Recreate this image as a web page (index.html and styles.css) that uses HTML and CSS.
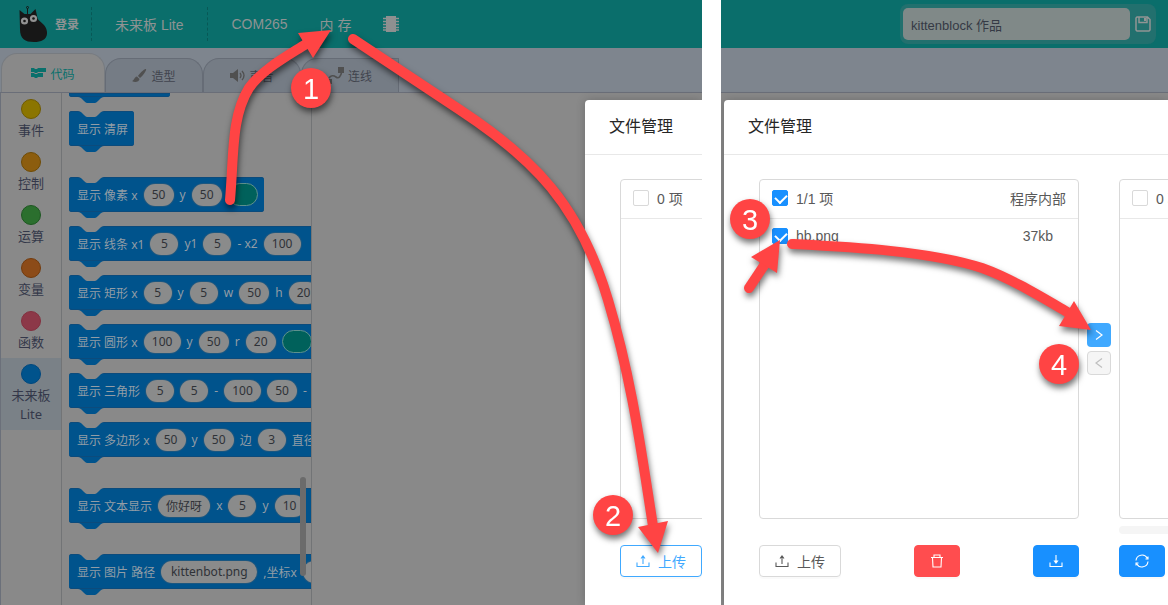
FILE: index.html
```html
<!DOCTYPE html>
<html lang="zh-CN">
<head>
<meta charset="utf-8">
<title>文件管理</title>
<link rel="stylesheet" href="styles.css">
</head>
<body>
<main class="guide">
  <section class="shot">
    <header class="topbar">
      <svg class="logo" viewBox="0 0 28 36" aria-hidden="true">
        <path d="M8.500 8V2.500" stroke="#171717" fill="none"/><circle cx="8.500" cy="1.500" r="1" fill="none" stroke="#171717"/>
        <path d="M0.500 4 5.500 8h6L16.500 3l2 9c1 4 9 6 9.500 14 .5 7-5 10-13 10C6 36 1 33 1 23Z" fill="#171717"/>
        <circle cx="5.500" cy="15" r="3.600" fill="#929292"/><circle cx="14.500" cy="12.500" r="3.600" fill="#929292"/>
        <circle cx="5.500" cy="15" r="1.300" fill="#171717"/><circle cx="14.500" cy="12.500" r="1.300" fill="#171717"/>
      </svg>
      <button class="login">登录</button>
      <button class="menu device">未来板 Lite</button>
      <button class="menu">COM265</button>
      <button class="menu memory">内 存</button>
      <button class="menu chip" aria-label="固件"><svg width="16" height="16" viewBox="0 0 16 16"><path d="M3 0h10v16H3z" fill="#8e9090"/><path d="M0 2.500h16M0 5.500h16M0 8.500h16M0 11.500h16M0 14h16" stroke="#8e9090" stroke-width="1.500"/></svg></button>
    </header>
    <nav class="tabs">
      <button class="tab active"><svg width="15" height="12" viewBox="0 0 15 12"><path d="M0 1h3l1 1h2l1-1h8v4H7L6 6H4L3 5H0zM0 6h3l1 1h2l1-1h5v4H7l-1 1H4l-1-1H0z" fill="currentColor"/></svg>代码</button>
      <button class="tab"><svg width="15" height="15" viewBox="0 0 15 15"><path d="M14 1c1 1-4 8-6 9L6 8c1-2 7-8 8-7zM5 8.500 7.500 11C7 14 3 15 0 13c2 0 2-4 5-4.500z" fill="#505050"/></svg>造型</button>
      <button class="tab"><svg width="15" height="13" viewBox="0 0 15 13"><path d="M0 4h3l5-4v13L3 9H0z" fill="#505050"/><path d="M10 4q2 2.500 0 5M12 2q4 4.500 0 9" fill="none" stroke="#505050" stroke-width="1.300"/></svg>声音</button>
      <button class="tab last"><svg width="16" height="17" viewBox="0 0 16 17"><path d="M1 11q3-4 7-1t6-6" fill="none" stroke="#505050" stroke-width="1.600"/><path d="M10 0h6v6h-6zM0 12h4v5H0z" fill="#505050"/></svg>连线</button>
    </nav>
    <div class="editor">
      <nav class="categories">
        <button class="category"><i class="dot yellow"></i>事件</button>
        <button class="category"><i class="dot amber"></i>控制</button>
        <button class="category"><i class="dot green"></i>运算</button>
        <button class="category"><i class="dot orange"></i>变量</button>
        <button class="category"><i class="dot pink"></i>函数</button>
        <button class="category selected"><i class="dot blue"></i>未来板<br>Lite</button>
      </nav>
      <div class="palette">
        <div class="block cut"></div>
        <div class="block">显示 清屏</div>
        <div class="block spaced">显示 像素 x <input class="field two" aria-label="x" value="50"> y <input class="field two" aria-label="y" value="50"> <span class="swatch"></span></div>
        <div class="block">显示 线条 x1 <input class="field" aria-label="x1" value="5"> y1 <input class="field" aria-label="y1" value="5"> - x2 <input class="field three" aria-label="x2" value="100"><span class="tail"></span></div>
        <div class="block">显示 矩形 x <input class="field" aria-label="x" value="5"> y <input class="field" aria-label="y" value="5"> w <input class="field two" aria-label="w" value="50"> h <input class="field two" aria-label="h" value="20"></div>
        <div class="block">显示 圆形 x <input class="field three" aria-label="x" value="100"> y <input class="field two" aria-label="y" value="50"> r <input class="field two" aria-label="r" value="20"> <span class="swatch"></span></div>
        <div class="block">显示 三角形 <input class="field" aria-label="x1" value="5"> <input class="field" aria-label="y1" value="5"> - <input class="field three" aria-label="x2" value="100"> <input class="field two" aria-label="y2" value="50"> -</div>
        <div class="block">显示 多边形 x <input class="field two" aria-label="x" value="50"> y <input class="field two" aria-label="y" value="50"> 边 <input class="field" aria-label="边" value="3"> 直径</div>
        <div class="block spaced">显示 文本显示 <input class="field word" aria-label="文本" value="你好呀"> x <input class="field" aria-label="x" value="5"> y <input class="field two" aria-label="y" value="10"><span class="tail"></span></div>
        <div class="block spaced">显示 图片 路径 <input class="field path" aria-label="路径" value="kittenbot.png"> ,坐标x <input class="field" aria-label="x" value="5"></div>
        <div class="scrollbar"></div>
      </div>
      <div class="stage"></div>
    </div>
    <section class="dialog narrow" aria-label="文件管理">
      <h2 class="title">文件管理</h2>
      <div class="dialog-body">
        <div class="transfer">
          <div class="panel">
            <label class="row head"><input class="check" type="checkbox"><span>0 项</span></label>
          </div>
        </div>
        <div class="actions">
          <button class="btn upload focus"><svg class="icon" viewBox="0 0 14 14"><path d="M1 8.500V12.500h12V8.500M7 10V2M5 4.500 7 2l2 2.500"/></svg>上传</button>
        </div>
      </div>
    </section>
  </section>

  <section class="shot">
    <header class="topbar end">
      <div class="project">
        <input class="name" aria-label="作品名称" value="kittenblock 作品">
        <button class="save" aria-label="保存"><svg width="16" height="16" viewBox="0 0 16 16"><path d="M2 1h10.500L15 3.500V14l-1 1H2l-1-1V2zM4 1v5.500h8V1" fill="none" stroke="#919494" stroke-width="1.500"/><path d="M9 2h2v3H9z" fill="#919494"/></svg></button>
      </div>
    </header>
    <div class="tabs"></div>
    <div class="editor"><div class="stage"></div></div>
    <section class="dialog wide" aria-label="文件管理">
      <h2 class="title">文件管理</h2>
      <div class="dialog-body">
        <div class="transfer">
          <div class="panel">
            <label class="row head"><input class="check" type="checkbox" checked><span>1/1 项</span><span class="note">程序内部</span></label>
            <label class="row"><input class="check" type="checkbox" checked><span>hb.png</span><span class="note size">37kb</span></label>
          </div>
          <div class="movers">
            <button class="mover" aria-label="右移"><svg class="arrow" viewBox="0 0 10 12"><path d="M2 1.500 8 6l-6 4.500"/></svg></button>
            <button class="mover off" aria-label="左移" disabled><svg class="arrow" viewBox="0 0 10 12"><path d="M8 1.500 2 6l6 4.500"/></svg></button>
          </div>
          <div class="target">
            <div class="panel">
              <label class="row head"><input class="check" type="checkbox"><span>0 项</span></label>
            </div>
            <div class="progress"></div>
          </div>
        </div>
        <div class="actions">
          <div class="group">
            <button class="btn upload"><svg class="icon" viewBox="0 0 14 14"><path d="M1 8.500V12.500h12V8.500M7 10V2M5 4.500 7 2l2 2.500"/></svg>上传</button>
            <button class="btn solid danger" aria-label="删除"><svg class="icon" viewBox="0 0 14 14"><path d="M1 3.500h12M4 3.500V1h6v2.500M2.500 3.500l.5 9.500h8l.5-9.500"/></svg></button>
            <button class="btn solid" aria-label="下载"><svg class="icon" viewBox="0 0 14 14"><path d="M1 8.500V12.500h12V8.500M7 1V8.500M5.500 7h3L7 9z"/></svg></button>
          </div>
          <button class="btn solid" aria-label="刷新"><svg class="icon" viewBox="0 0 14 14"><path d="M1 6.500A6 6 0 0 1 12.300 4.300M13 7.500A6 6 0 0 1 1.700 9.700M13 2.500v2.500h-2.500M1 11.500V9h2.500"/></svg></button>
        </div>
      </div>
    </section>
  </section>

  <svg class="notes" width="1168" height="605" viewBox="0 0 1168 605" aria-hidden="true">
    <g class="shaft">
      <path d="M230 200C234 155 231 117 249 88 262 70 284 58 306 44"/>
      <path d="M353 39 460 110C533 158 580 205 608 300 632 380 641 450 653 526"/>
      <path d="M749 288 765 264"/>
      <path d="M792 244C850 247 930 251 982 268 1010 278 1038 295 1069 313"/>
    </g>
    <g class="mark">
      <path d="M331 30 298 33 313 58zM658 553 638 527 668 521zM780 240 751 257 777 273zM1091 330 1074 301 1059 326z"/>
      <circle cx="311" cy="88" r="20"/><circle cx="613" cy="515" r="20"/><circle cx="750" cy="219" r="20"/><circle cx="1059" cy="364" r="20"/>
    </g>
    <g class="number">
      <text x="311" y="99">1</text><text x="613" y="526">2</text><text x="750" y="230">3</text><text x="1059" y="375">4</text>
    </g>
  </svg>
</main>
</body>
</html>
```
FILE: styles.css
```css
* { box-sizing: border-box; }
body {
  margin: 0;
  background: #fff;
  font-family: "Liberation Sans", "Noto Sans CJK SC", sans-serif;
  font-size: 14px;
}
button, input { font: inherit; margin: 0; padding: 0; border: 0; background: none; color: inherit; }
.guide {
  position: relative;
  display: grid;
  grid-template-columns: minmax(0, 702fr) minmax(0, 447fr);
  column-gap: 19px;
  min-height: 100vh;
  overflow: hidden;
}
.shot { position: relative; display: flex; flex-direction: column; overflow: hidden; background: #898989; }

/* top bar */
.topbar { display: flex; align-items: center; height: 48px; padding: 0 0 1px 19px; background: #0a6e6b; color: #8e9393; }
.topbar.end { justify-content: flex-end; padding: 0 12px 0 0; }
.logo { width: 28px; height: 36px; }
.login { width: 45px; height: 34px; padding: 0 13px 0 8px; border-right: 1px dashed #085856; font-size: 12px; font-weight: bold; white-space: nowrap; }
.menu { padding-left: 23px; white-space: nowrap; }
.device { height: 34px; padding-right: 24px; border-right: 1px dashed #085856; }
.memory, .chip { padding-left: 32px; }
.chip svg { display: block; }
.project { display: flex; align-items: center; gap: 5px; height: 40px; padding: 0 5px 0 3px; border-radius: 8px; background: #22706e; }
.name { width: 227px; height: 32px; padding: 0 8px; border-radius: 5px; background: #808988; color: #353a45; font-size: 13px; }
.save { display: flex; width: 16px; height: 16px; }

/* tabs */
.tabs { display: flex; align-items: flex-end; height: 45px; padding-left: 1px; background: #7e858e; border-bottom: 1px solid #6a6e78; }
.tab {
  display: flex; align-items: center; justify-content: center; gap: 4px;
  width: 98px; height: 34px;
  border: 1px solid #666c76; border-bottom: 0; border-radius: 16px 16px 0 0;
  background: #757c85; color: #41444e; font-size: 12px;
}
.tab.active { width: 104px; height: 39px; border-color: #777b80; background: #898989; color: #0a706c; }
.tab.last { border-radius: 16px 0 0 0; }

/* block editor */
.editor { display: flex; flex: 1; }
.categories { width: 62px; border-left: 1px solid #6b707a; border-right: 1px solid #727476; }
.category { display: block; width: 100%; padding: 6px 0; color: #34384a; font-size: 13px; line-height: 19px; font-family: "Noto Sans", "Noto Sans CJK SC", sans-serif; }
.category.selected { background: #7a8187; }
.dot { display: block; width: 20px; height: 20px; margin: 0 auto 2px; border: 1px solid; border-radius: 50%; }
.yellow { background: #8b7500; border-color: #705b00; }
.amber { background: #8c5d0e; border-color: #6f4b05; }
.green { background: #2b6f2e; border-color: #1d5721; }
.orange { background: #8c4b18; border-color: #733b0d; }
.pink { background: #8c3848; border-color: #83303f; }
.blue { background: #00538c; border-color: #00487e; }
.palette {
  position: relative; display: flex; flex-direction: column; align-items: flex-start; gap: 14px;
  width: 250px; padding-left: 7px; overflow: hidden; border-right: 1px solid #727476;
}
.stage { flex: 1; }
.block {
  position: relative; display: flex; align-items: center; flex: none; gap: 6px;
  height: 35px; padding: 0 6px 0 8px; border-radius: 3px;
  background: #00538c; box-shadow: inset 0 1px #0c4b7c, inset 0 -1px #0c4b7c;
  color: #929da6; font: 12px "Noto Sans", "Noto Sans CJK SC", sans-serif; white-space: nowrap;
}
.block::before, .block::after {
  content: ""; position: absolute; left: 9px; width: 26px; height: 6px; background: #898989;
  clip-path: path("M0 0C2 0 3 1 4 2L6 4Q8 6 9 6H17Q18 6 20 4L22 2C23 1 24 0 26 0Z");
}
.block::before { top: 0; }
.block::after { top: 100%; background: #00538c; }
.cut { width: 101px; height: 4px; border-radius: 0 0 3px 3px; }
.cut::before { display: none; }
.spaced { margin-top: 17px; }
.field { flex: none; width: 28px; height: 22px; border-radius: 11px; background: #8a8b8b; color: #2f3237; text-align: center; box-shadow: 0 0 0 1px #1b5780; }
.field.two { width: 30px; }
.field.three { width: 37px; }
.field.word { width: 52px; }
.field.path { width: 96px; }
.swatch { flex: none; width: 30px; height: 23px; border: 1px solid #5e918d; border-radius: 12px; background: #00615b; }
.tail { width: 60px; }
.scrollbar { position: absolute; right: 5px; top: 384px; width: 6px; height: 99px; border-radius: 3px; background: #6b6b6b; }

/* file manager dialog */
.dialog { position: absolute; top: 100px; right: 0; bottom: 0; overflow: hidden; background: #fff; border-radius: 4px 0 0 0; box-shadow: 0 0 10px rgba(0, 0, 0, .2); color: #595959; }
.narrow { width: 117px; }
.wide { left: 3px; }
.title { margin: 0; padding: 0 24px; height: 55px; border-bottom: 1px solid #e8e8e8; color: #262626; font-size: 16px; font-weight: normal; line-height: 53px; white-space: nowrap; }
.dialog-body { padding: 24px 0 0 35px; }
.transfer { display: flex; }
.panel { flex: none; width: 320px; height: 340px; border: 1px solid #d9d9d9; border-radius: 4px; }
.row { display: flex; align-items: center; gap: 8px; height: 34px; padding: 0 12px; white-space: nowrap; }
.row.head { height: 39px; padding-bottom: 2px; border-bottom: 1px solid #e8e8e8; }
.note { margin-left: auto; }
.note.size { padding-right: 13px; }
.check { appearance: none; flex: none; width: 16px; height: 16px; border: 1px solid #d9d9d9; border-radius: 2px; background: #fff; }
.check:checked { border-color: #1890ff; background: #1890ff; }
.check:checked::after { content: ""; display: block; width: 6px; height: 9px; margin: 1px 0 0 4px; border: solid #fff; border-width: 0 2px 2px 0; transform: rotate(45deg); }
.movers { display: flex; flex: none; flex-direction: column; justify-content: center; gap: 4px; width: 40px; padding: 0 8px; height: 340px; }
.mover { display: flex; align-items: center; justify-content: center; width: 24px; height: 24px; border-radius: 4px; background: #40a9ff; color: #fff; }
.mover.off { border: 1px solid #d9d9d9; background: #f5f5f5; color: #bfbfbf; }
.arrow { width: 10px; height: 12px; fill: none; stroke: currentColor; stroke-width: 1.2; }
.target { flex: none; height: 366px; }
.progress { height: 8px; margin-top: 7px; border-radius: 4px; background: #f5f5f5; }
.narrow .transfer { height: 366px; }
.actions { display: flex; gap: 40px; }
.group { display: flex; flex: none; justify-content: space-between; width: 320px; }
.btn { display: flex; flex: none; align-items: center; justify-content: center; gap: 8px; width: 46px; height: 32px; border: 1px solid #1890ff; border-radius: 4px; box-shadow: 0 2px 0 rgba(0, 0, 0, .02); }
.upload { width: 82px; border-color: #d9d9d9; }
.upload.focus { border-color: #40a9ff; color: #40a9ff; }
.solid { background: #1890ff; color: #fff; }
.danger { border-color: #ff4d4f; background: #ff4d4f; }
.icon { width: 14px; height: 14px; fill: none; stroke: currentColor; stroke-width: 1.1; }

/* numbered steps drawn over the page */
.notes { position: absolute; left: 0; top: 0; pointer-events: none; filter: drop-shadow(1px 4px 3px rgba(0, 0, 0, .55)); }
.shaft { fill: none; stroke: #ff4444; stroke-width: 10; stroke-linecap: round; }
.mark { fill: #ff4444; }
.number { fill: #fff; font-size: 29px; text-anchor: middle; }
```
